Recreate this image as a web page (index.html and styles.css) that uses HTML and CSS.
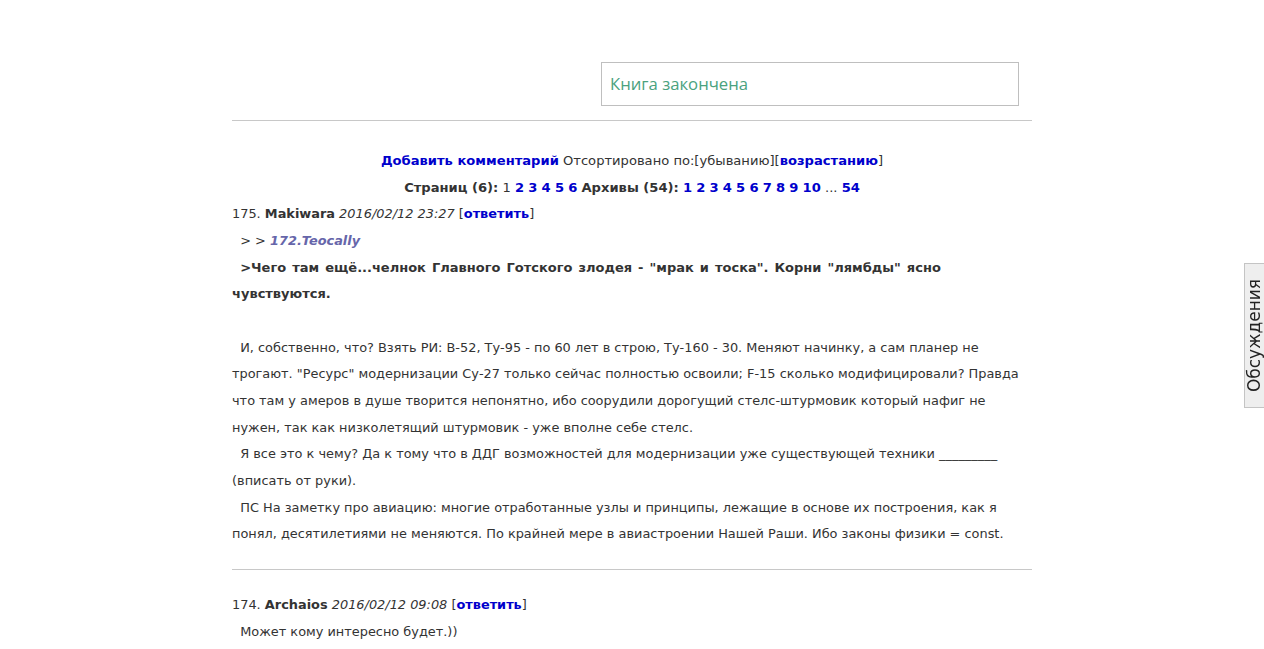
FILE: index.html
```html
<!DOCTYPE html>
<html lang="ru">
<head>
<meta charset="utf-8">
<title>Комментарии</title>
<link rel="stylesheet" href="styles.css">
</head>
<body>
<div class="page">
  <div class="top">
    <div class="search">Книга закончена</div>
  </div>
  <hr class="rule">
  <div class="controls">
    <div class="line"><a class="lnk" href="#">Добавить комментарий</a> Отсортировано по:[убыванию][<a class="lnk" href="#">возрастанию</a>]</div>
    <div class="line"><b>Страниц (6):</b> 1 <a class="lnk" href="#">2</a> <a class="lnk" href="#">3</a> <a class="lnk" href="#">4</a> <a class="lnk" href="#">5</a> <a class="lnk" href="#">6</a> <b>Архивы (54):</b> <a class="lnk" href="#">1</a> <a class="lnk" href="#">2</a> <a class="lnk" href="#">3</a> <a class="lnk" href="#">4</a> <a class="lnk" href="#">5</a> <a class="lnk" href="#">6</a> <a class="lnk" href="#">7</a> <a class="lnk" href="#">8</a> <a class="lnk" href="#">9</a> <a class="lnk" href="#">10</a> ... <a class="lnk" href="#">54</a></div>
  </div>
  <div class="comment">
    <div class="head">175. <b>Makiwara</b> <i>2016/02/12 23:27</i> [<a class="lnk" href="#">ответить</a>]</div>
    <div class="body">
      <div class="quote">&nbsp;&nbsp;&gt; &gt; <a class="ref" href="#">172.Teocally</a><br>
      &nbsp;&nbsp;<b>&gt;Чего там ещё...челнок Главного Готского злодея - "мрак и тоска". Корни "лямбды" ясно чувствуются.</b></div>
      <br>
      &nbsp;&nbsp;И, собственно, что? Взять РИ: В-52, Ту-95 - по 60 лет в строю, Ту-160 - 30. Меняют начинку, а сам планер не трогают. "Ресурс" модернизации Су-27 только сейчас полностью освоили; F-15 сколько модифицировали? Правда что там у амеров в душе творится непонятно, ибо соорудили дорогущий стелс-штурмовик который нафиг не нужен, так как низколетящий штурмовик - уже вполне себе стелс.<br>
      &nbsp;&nbsp;Я все это к чему? Да к тому что в ДДГ возможностей для модернизации уже существующей техники _________ (вписать от руки).<br>
      &nbsp;&nbsp;ПС На заметку про авиацию: многие отработанные узлы и принципы, лежащие в основе их построения, как я понял, десятилетиями не меняются. По крайней мере в авиастроении Нашей Раши. Ибо законы физики = const.
    </div>
  </div>
  <hr class="rule rule-sep">
  <div class="comment">
    <div class="head">174. <b>Archaios</b> <i>2016/02/12 09:08</i> [<a class="lnk" href="#">ответить</a>]</div>
    <div class="body">
      &nbsp;&nbsp;Может кому интересно будет.))
    </div>
  </div>
</div>
<div class="sidetab"><span class="sidetab-text">Обсуждения</span></div>
</body>
</html>
```
FILE: styles.css
```css
html, body {
  margin: 0;
  padding: 0;
  background: #fff;
}
body {
  font-family: "DejaVu Sans", Verdana, sans-serif;
  font-size: 12.9px;
  line-height: 26.67px;
  color: #333;
}
.page {
  width: 800px;
  margin: 0 auto;
}
.top {
  display: flex;
  justify-content: flex-end;
  padding: 62px 13px 14px 0;
}
.search {
  box-sizing: border-box;
  width: 418px;
  height: 44px;
  border: 1px solid #bfbfbf;
  padding: 0 8px;
  display: flex;
  align-items: center;
  font-family: "Open Sans", "Liberation Sans", sans-serif;
  font-size: 16.7px;
  color: #4aa27e;
}
.rule {
  border: 0;
  border-top: 1px solid #c8c8c8;
  margin: 0;
  height: 0;
}
.controls {
  text-align: center;
  padding-top: 27px;
  font-size: 13.1px;
}
.lnk {
  color: #0000cc;
  font-weight: bold;
  text-decoration: none;
}
.ref {
  color: #6666aa;
  font-weight: bold;
  font-style: italic;
  text-decoration: none;
}
.quote {
  padding-right: 14px;
}
.quote b {
  font-size: 13px;
  word-spacing: 1.5px;
}
.rule-sep {
  margin-top: 21px;
  margin-bottom: 22px;
}
.sidetab {
  position: fixed;
  right: 0;
  top: 263px;
  width: 19px;
  height: 143px;
  background: #eeeeee;
  border: 1px solid #c4c4c4;
  border-right: 0;
  display: flex;
  align-items: center;
  justify-content: center;
}
.sidetab-text {
  display: block;
  transform: rotate(-90deg);
  white-space: nowrap;
  font-family: "DejaVu Sans", sans-serif;
  font-size: 17px;
  line-height: 19px;
  color: #222;
}
```
